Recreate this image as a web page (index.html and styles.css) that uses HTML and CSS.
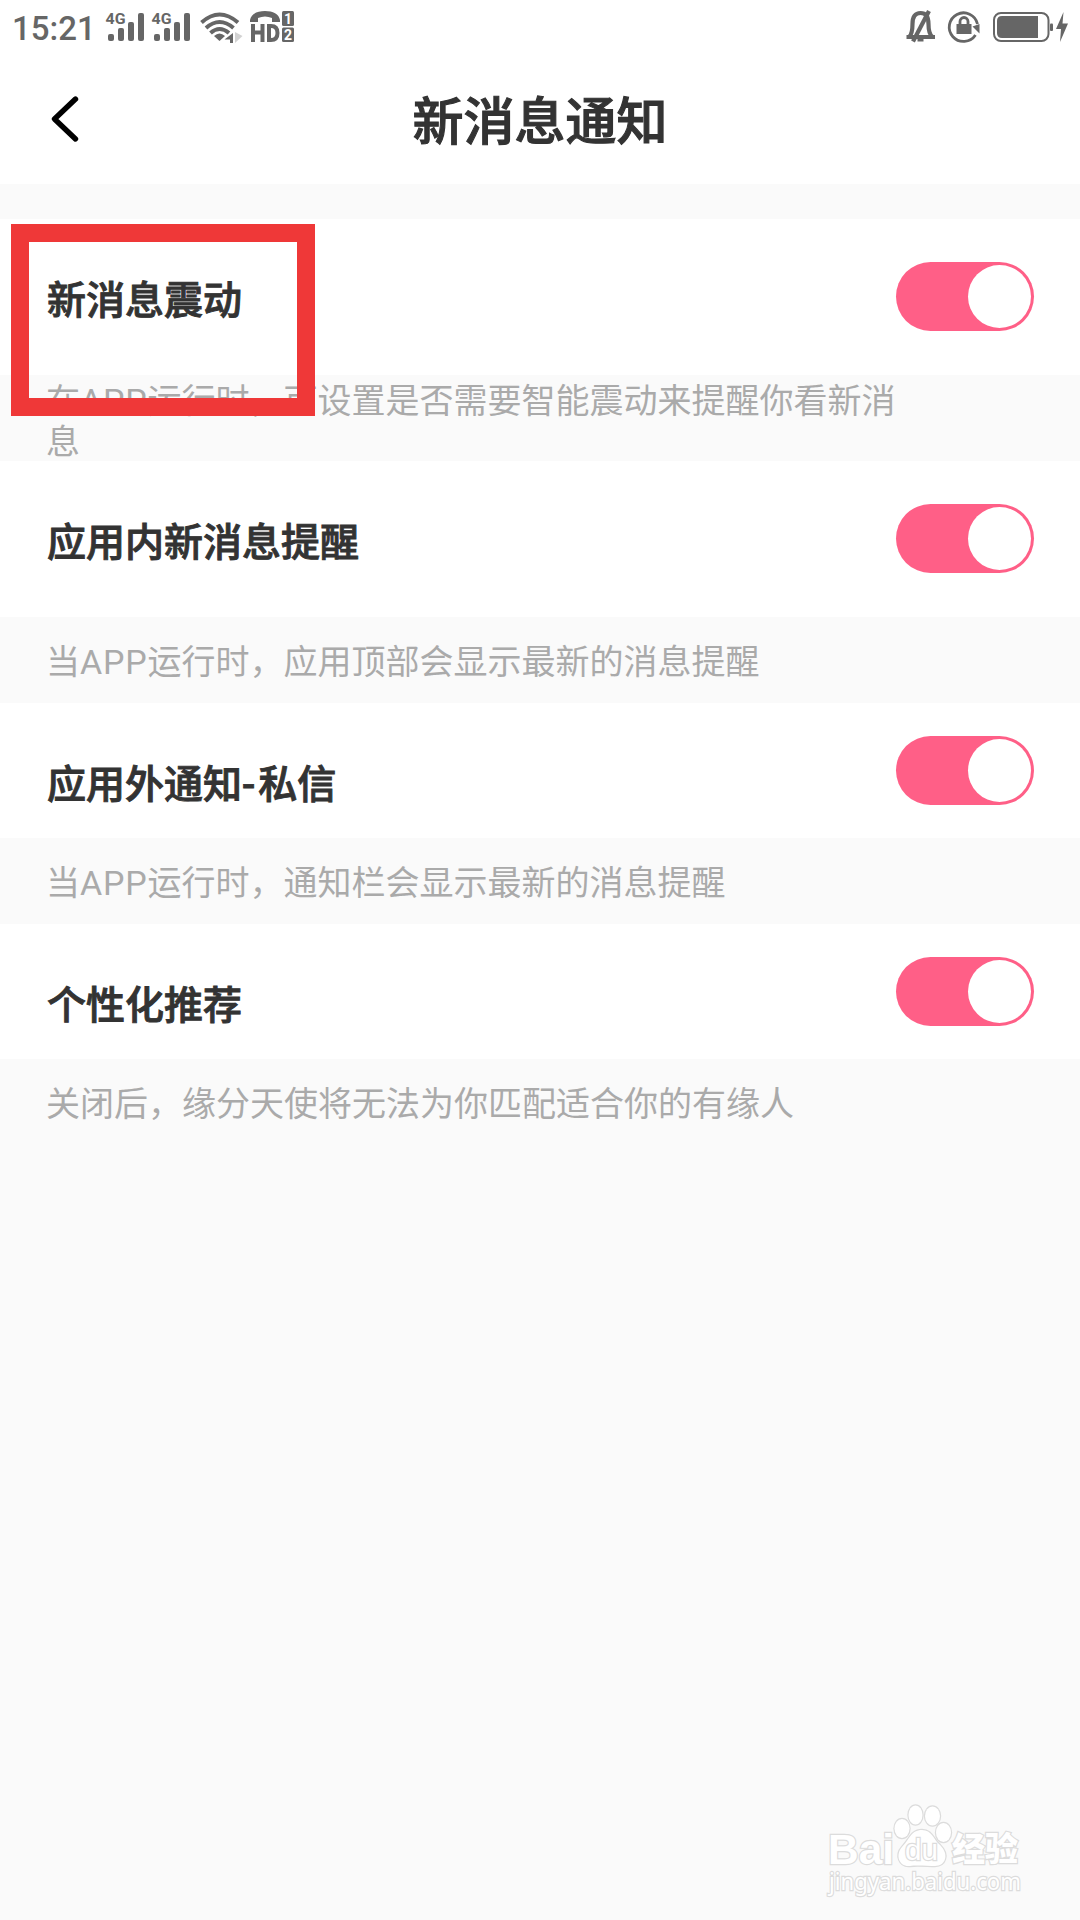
FILE: index.html
```html
<!DOCTYPE html>
<html lang="zh-CN">
<head>
<meta charset="utf-8">
<title>新消息通知</title>
<link rel="stylesheet" href="styles.css">
</head>
<body>
<div class="screen">
  <div class="status">
    <div class="status-left">
      <span class="clock">15:21</span>
      <svg class="signals" width="86" height="32" viewBox="105 11 86 32">
        <g id="sig">
          <text class="net" x="105.5" y="23.5" textLength="20" lengthAdjust="spacingAndGlyphs">4G</text>
          <rect x="108" y="34" width="6" height="7" rx="2"/>
          <rect x="118" y="28" width="6" height="13" rx="2"/>
          <rect x="128" y="22" width="6" height="19" rx="2"/>
          <rect x="138" y="13" width="6" height="28" rx="2"/>
        </g>
        <use href="#sig" x="46"/>
      </svg>
      <svg class="wifi" width="44" height="32" viewBox="199 11 44 32">
        <g fill="none" stroke="#666" stroke-width="4">
          <path d="M201.500 22.500Q219.500 6.500 238 22.500"/>
          <path d="M206 28Q219.500 16 233.500 28"/>
          <path d="M210.500 33Q219.500 25 229 33"/>
        </g>
        <path d="M214 36Q219.500 31 225 36L219.500 41Z"/>
        <path d="M235 30V44H233.500V29Z" fill="#fff"/>
        <path d="M233 33V43H230V39.500H224.500Z"/>
        <path class="dim" d="M235 32L242.500 36L235 43Z"/>
      </svg>
      <svg class="hd" width="44" height="32" viewBox="250 11 44 32">
        <path d="M250 20C251 14 257 11 265 11S279 14 280 20V22H272V18Q265 15 258 18V22H250Z"/>
        <path fill="none" stroke="#666" stroke-width="4" d="M253 24V42M262.500 24V42M253 32.500H262.500M269 26V40H271Q277.500 40 277.500 33T271 26Z"/>
        <rect x="282" y="11" width="12" height="15" rx="1.500"/>
        <rect x="282" y="27.500" width="12" height="14.500" rx="1.500"/>
        <text class="sim" x="288" y="23.500">1</text>
        <text class="sim" x="288" y="39.500">2</text>
      </svg>
    </div>
    <svg class="status-right" width="164" height="36" viewBox="904 9 164 36">
      <g fill="none" stroke="#666" stroke-width="4.200">
        <path d="M906.500 37H935M909 37Q912.500 34 912.500 24Q912.500 13 920.500 13T928.500 24Q928.500 34 932.500 37"/>
        <path d="M913 41.500L929 11"/>
        <path d="M917.500 40H923.500" stroke-width="3"/>
      </g>
      <path fill="none" stroke="#666" stroke-width="2.800" d="M975.500 35A14.300 14.300 0 1 1 977.500 24"/>
      <path d="M972.500 26.500L979.500 24V33.500Z"/>
      <rect x="956.500" y="24" width="15" height="10"/>
      <path fill="none" stroke="#666" stroke-width="2.800" d="M960 25V21.500A4 4 0 0 1 968 21.500V25"/>
      <rect x="994" y="13" width="54.500" height="28" rx="7" fill="none" stroke="#666" stroke-width="2"/>
      <path d="M1002 16H1038V38H1002Q997 38 997 33V21Q997 16 1002 16Z"/>
      <rect x="1050" y="23.500" width="3" height="7.500" rx="1"/>
      <path d="M1063.500 12L1056 29H1061L1060 42L1068 23.500H1062.500Z"/>
    </svg>
  </div>
  <header class="header">
    <svg class="back" width="30" height="48" viewBox="50 95 30 48"><path d="M75.500 99L54.500 119L75.500 139" fill="none" stroke="#000" stroke-width="5.400" stroke-linecap="round" stroke-linejoin="round"/></svg>
    <h1>新消息通知</h1>
  </header>
  <main class="list">
    <section class="marked">
      <div class="row tall"><span class="label">新消息震动</span><span class="switch"></span></div>
      <p class="desc double"><span>在<span class="latin">APP</span>运行时，可设置是否需要智能震动来提醒你看新消息</span></p>
      <div class="highlight"></div>
    </section>
    <section>
      <div class="row tall"><span class="label">应用内新消息提醒</span><span class="switch"></span></div>
      <p class="desc"><span>当<span class="latin">APP</span>运行时，应用顶部会显示最新的消息提醒</span></p>
    </section>
    <section>
      <div class="row short"><span class="label">应用外通知<span class="dash">-</span>私信</span><span class="switch"></span></div>
      <p class="desc"><span>当<span class="latin">APP</span>运行时，通知栏会显示最新的消息提醒</span></p>
    </section>
    <section>
      <div class="row short"><span class="label">个性化推荐</span><span class="switch"></span></div>
      <p class="desc"><span>关闭后，缘分天使将无法为你匹配适合你的有缘人</span></p>
    </section>
  </main>
  <svg class="watermark" width="204" height="104" viewBox="822 1798 204 104">
    <g class="outlined">
      <text class="brand" x="828" y="1863.500" textLength="66" lengthAdjust="spacingAndGlyphs">Bai</text>
      <ellipse cx="902" cy="1828.500" rx="7.500" ry="9.500"/>
      <ellipse cx="915.500" cy="1815" rx="7" ry="9.500"/>
      <ellipse cx="932.500" cy="1816" rx="7.500" ry="9.500"/>
      <ellipse cx="943.500" cy="1832.500" rx="7.500" ry="9.500"/>
      <path d="M922 1830C932 1830 933 1839 940 1845C950 1855 945 1866 935 1866C928 1866 916 1865 910 1866C899 1867 895 1855 902 1847C910 1839 911 1830 922 1830Z"/>
      <text class="du" x="905" y="1860" textLength="33" lengthAdjust="spacingAndGlyphs">du</text>
      <text class="cn" x="952" y="1861" textLength="66" lengthAdjust="spacingAndGlyphs">经验</text>
      <text class="url" x="829" y="1890" textLength="192" lengthAdjust="spacingAndGlyphs">jingyan.baidu.com</text>
    </g>
  </svg>
</div>
</body>
</html>
```
FILE: styles.css
```css
* { box-sizing: border-box; }
body {
  margin: 0;
  background: #fafafa;
  font-family: Roboto, "Noto Sans CJK SC", sans-serif;
}
.screen {
  position: relative;
  width: 1080px;
  height: 1920px;
  overflow: hidden;
}
.status {
  display: flex;
  justify-content: space-between;
  height: 56px;
  padding: 9px 12px 0 12px;
  background: #fff;
}
.status svg { fill: #666; }
.status .dim { fill: #d2d2d2; }
.status-left {
  display: flex;
  align-items: flex-start;
  padding-top: 2px;
}
.clock {
  width: 93px;
  font-size: 33px;
  line-height: 36px;
  font-weight: 500;
  color: #666;
}
.wifi { margin-left: 8px; }
.hd { margin-left: 7px; }
.net { font-size: 14px; font-weight: 700; }
.sim {
  font-size: 14px;
  font-weight: 700;
  fill: #fff;
  text-anchor: middle;
}
.header {
  display: grid;
  grid-template-columns: 200px 1fr 200px;
  align-items: center;
  height: 128px;
  background: #fff;
}
.back { margin: -2px 0 0 50px; }
.header h1 {
  margin: 5px 0 0;
  text-align: center;
  font-size: 51px;
  line-height: 76px;
  font-weight: 500;
  color: #333;
  -webkit-text-stroke: 1.1px #333;
}
.list { padding-top: 35px; }
.marked { position: relative; }
.highlight {
  position: absolute;
  left: 11px;
  top: 5px;
  width: 304px;
  height: 192px;
  border: 18px solid #ef3838;
}
.row {
  display: flex;
  justify-content: space-between;
  align-items: center;
  padding: 0 46px;
  background: #fff;
}
.tall { height: 156px; padding-bottom: 1px; }
.short { height: 135px; }
.label {
  padding: 8px 0 0 1px;
  font-size: 39px;
  line-height: 58px;
  font-weight: 500;
  color: #333;
  -webkit-text-stroke: 0.9px #333;
}
.short .label { padding-top: 28px; }
.dash { letter-spacing: 3px; }
.switch {
  width: 138px;
  height: 69px;
  padding: 3px;
  border-radius: 35px;
  background: #ff5f87;
}
.switch::after {
  content: "";
  display: block;
  width: 63px;
  height: 63px;
  margin-left: auto;
  border-radius: 50%;
  background: #fff;
}
.desc {
  display: flex;
  align-items: center;
  height: 86px;
  margin: 0;
  padding: 4px 180px 0 46px;
  font-size: 34px;
  line-height: 41px;
  color: #aaa;
}
.double { padding-top: 7px; }
.latin { letter-spacing: 0.8px; }
.watermark {
  position: absolute;
  left: 822px;
  top: 1798px;
}
.outlined {
  fill: #fff;
  stroke: #dcdcdc;
  stroke-width: 2.4;
  paint-order: stroke;
}
.brand { font: 700 42px "Liberation Sans", sans-serif; }
.du { font: 400 30px "Liberation Sans", sans-serif; }
.cn { font: 900 33px "Noto Sans CJK SC", sans-serif; }
.url { font: 400 23px "Noto Sans", sans-serif; }
```
